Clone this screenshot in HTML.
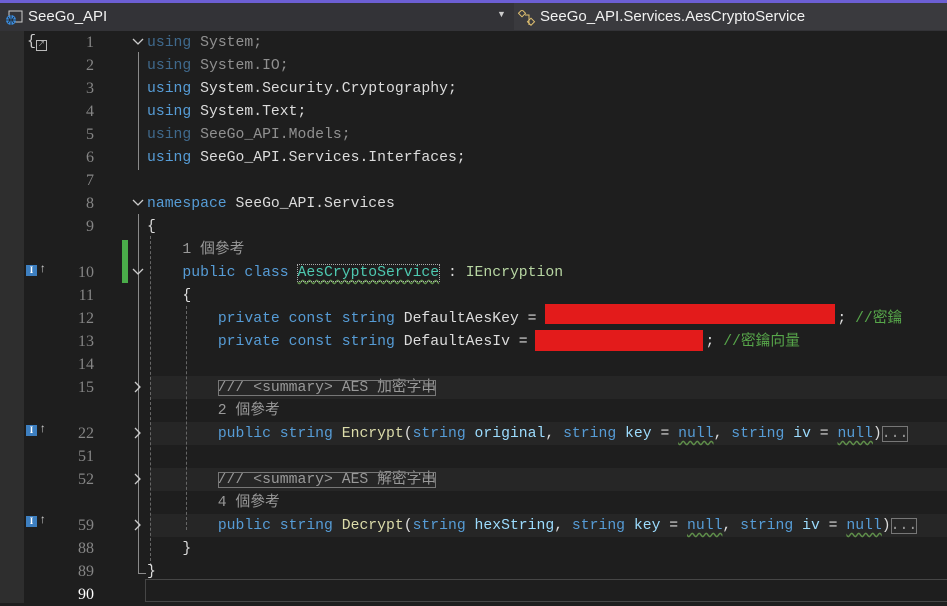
<!DOCTYPE html>
<html><head><meta charset="utf-8"><style>
body{margin:0;width:947px;height:603px;background:#1e1e1e;overflow:hidden;position:relative;font-family:"Liberation Mono","Noto Sans CJK TC",monospace;}
.top{position:absolute;left:0;top:0;width:947px;height:3px;background:#6c5fd4}
.hdr{position:absolute;left:0;top:3px;width:947px;height:28px;background:#333337;font-family:"Liberation Sans","Noto Sans CJK TC",sans-serif;font-size:15px;color:#f1f1f1}
.strip{position:absolute;left:0;top:31px;width:24px;height:572px;background:#2e2e2e}
.ln{position:absolute;left:50px;width:44px;text-align:right;color:#858585;font-family:"Liberation Serif",serif;font-size:16px;line-height:23px}
.row{position:absolute;left:147px;white-space:pre;font-size:14.75px;line-height:23px;color:#dcdcdc;top:1px}
.k{color:#569cd6}.t{color:#4ec9b0}.m{color:#dcdcaa}.p{color:#9cdcfe}.c{color:#57a64a}.g{color:#999}.d{opacity:.6}
.band{position:absolute;left:150px;width:797px;height:23px;background:#262626}
.w{text-decoration:underline wavy #5f8f4a;text-underline-offset:3px}
.fold{position:absolute;left:132px;width:12px;height:12px}
.icon{position:absolute;left:26px;width:11px;height:11px;background:#3d7fc0;color:#fff;font:bold 9px "Liberation Serif";text-align:center;line-height:11px}
.arr{position:absolute;left:39px;color:#ccc;font-size:12px;font-weight:bold}
</style></head><body>
<div class="top"></div>
<div class="hdr">
<svg style="position:absolute;left:5px;top:7px" width="18" height="16"><rect x="4" y="1" width="13" height="11" fill="none" stroke="#ccc"/><circle cx="6" cy="10" r="5" fill="#3b8de0"/><path d="M1 10h10M6 5v10M3 7q3 3 0 6M9 7q-3 3 0 6" stroke="#1e1e1e" fill="none" stroke-width=".8"/></svg>
<span style="position:absolute;left:28px;top:5px">SeeGo_API</span>
<span style="position:absolute;left:497px;top:6px;font-size:9px;color:#ccc">▼</span>
<div style="position:absolute;left:514px;top:0;width:433px;height:27px;background:#3a3a3e"></div>
<svg style="position:absolute;left:518px;top:7px" width="20" height="16"><rect x="1" y="1" width="5" height="5" transform="rotate(45 4 4)" fill="none" stroke="#e0c070"/><rect x="11" y="9" width="5" height="5" transform="rotate(45 13 11)" fill="none" stroke="#e0c070"/><path d="M7 5h4v10" stroke="#e0c070" fill="none"/></svg>
<span style="position:absolute;left:540px;top:5px">SeeGo_API.Services.AesCryptoService</span>
</div>
<div class="strip"></div>
<div style="position:absolute;left:27px;top:33px;color:#ccc;font-size:15px">{</div>
<div style="position:absolute;left:36px;top:40px;width:9px;height:9px;border:1px solid #bbb;font-size:7px;color:#bbb;line-height:9px;text-align:center">↗</div>

<div class="band" style="top:376px"></div>
<div class="band" style="top:422px"></div>
<div class="band" style="top:468px"></div>
<div class="band" style="top:514px"></div>

<div style="position:absolute;left:138px;top:52px;width:1px;height:118px;background:#8a8a8a"></div>
<div style="position:absolute;left:138px;top:214px;width:1px;height:360px;background:#8a8a8a"></div>
<div style="position:absolute;left:138px;top:573px;width:8px;height:1px;background:#8a8a8a"></div>
<div style="position:absolute;left:150px;top:236px;height:330px;border-left:1px dashed #666"></div>
<div style="position:absolute;left:186px;top:306px;height:224px;border-left:1px dashed #666"></div>
<div style="position:absolute;left:122px;top:240px;width:6px;height:43px;background:#4aac4a"></div>

<svg class="fold" style="top:36px"><path d="M1 3l5 5 5-5" stroke="#ccc" fill="none" stroke-width="1.3"/></svg>
<svg class="fold" style="top:197px"><path d="M1 3l5 5 5-5" stroke="#ccc" fill="none" stroke-width="1.3"/></svg>
<svg class="fold" style="top:266px"><path d="M1 3l5 5 5-5" stroke="#ccc" fill="none" stroke-width="1.3"/></svg>
<svg class="fold" style="top:381px"><path d="M3 1l5 5-5 5" stroke="#ccc" fill="none" stroke-width="1.3"/></svg>
<svg class="fold" style="top:427px"><path d="M3 1l5 5-5 5" stroke="#ccc" fill="none" stroke-width="1.3"/></svg>
<svg class="fold" style="top:473px"><path d="M3 1l5 5-5 5" stroke="#ccc" fill="none" stroke-width="1.3"/></svg>
<svg class="fold" style="top:519px"><path d="M3 1l5 5-5 5" stroke="#ccc" fill="none" stroke-width="1.3"/></svg>

<div class="icon" style="top:265px">I</div><div class="arr" style="top:262px">↑</div>
<div class="icon" style="top:425px">I</div><div class="arr" style="top:422px">↑</div>
<div class="icon" style="top:516px">I</div><div class="arr" style="top:513px">↑</div>

<div class="ln" style="top:31px">1</div><div class="ln" style="top:54px">2</div><div class="ln" style="top:77px">3</div><div class="ln" style="top:100px">4</div><div class="ln" style="top:123px">5</div><div class="ln" style="top:146px">6</div><div class="ln" style="top:169px">7</div><div class="ln" style="top:192px">8</div><div class="ln" style="top:215px">9</div><div class="ln" style="top:261px">10</div><div class="ln" style="top:284px">11</div><div class="ln" style="top:307px">12</div><div class="ln" style="top:330px">13</div><div class="ln" style="top:353px">14</div><div class="ln" style="top:376px">15</div><div class="ln" style="top:422px">22</div><div class="ln" style="top:445px">51</div><div class="ln" style="top:468px">52</div><div class="ln" style="top:514px">59</div><div class="ln" style="top:537px">88</div><div class="ln" style="top:560px">89</div><div class="ln" style="top:583px;color:#fff">90</div>

<div class="row d" style="top:32px"><span class="k">using</span> System;</div>
<div class="row d" style="top:55px"><span class="k">using</span> System.IO;</div>
<div class="row" style="top:78px"><span class="k">using</span> System.Security.Cryptography;</div>
<div class="row" style="top:101px"><span class="k">using</span> System.Text;</div>
<div class="row d" style="top:124px"><span class="k">using</span> SeeGo_API.Models;</div>
<div class="row" style="top:147px"><span class="k">using</span> SeeGo_API.Services.Interfaces;</div>
<div class="row" style="top:193px"><span class="k">namespace</span> SeeGo_API.Services</div>
<div class="row" style="top:216px">{</div>
<div class="row g" style="top:239px">    1 個參考</div>
<div class="row" style="top:262px">    <span class="k">public</span> <span class="k">class</span> <span class="t w" style="outline:1px dotted #aaa">AesCryptoService</span> : <span class="t" style="color:#b8d7a3">IEncryption</span></div>
<div class="row" style="top:285px">    {</div>
<div class="row" style="top:308px">        <span class="k">private</span> <span class="k">const</span> <span class="k">string</span> DefaultAesKey = <span style="display:inline-block;width:292px"></span>; <span class="c">//密鑰</span></div>
<div class="row" style="top:331px">        <span class="k">private</span> <span class="k">const</span> <span class="k">string</span> DefaultAesIv = <span style="display:inline-block;width:169px"></span>; <span class="c">//密鑰向量</span></div>
<div style="position:absolute;left:545px;top:304px;width:290px;height:20px;background:#e31b1b"></div>
<div style="position:absolute;left:535px;top:330px;width:168px;height:21px;background:#e31b1b"></div>
<div class="row g" style="top:377px">        <span style="outline:1px solid #777;outline-offset:-1px">/// &lt;summary&gt; AES 加密字串</span></div>
<div class="row g" style="top:400px">        2 個參考</div>
<div class="row" style="top:423px">        <span class="k">public</span> <span class="k">string</span> <span class="m">Encrypt</span>(<span class="k">string</span> <span class="p">original</span>, <span class="k">string</span> <span class="p">key</span> = <span class="k w">null</span>, <span class="k">string</span> <span class="p">iv</span> = <span class="k w">null</span>)<span class="g" style="outline:1px solid #777;outline-offset:-1px">...</span></div>
<div class="row g" style="top:469px">        <span style="outline:1px solid #777;outline-offset:-1px">/// &lt;summary&gt; AES 解密字串</span></div>
<div class="row g" style="top:492px">        4 個參考</div>
<div class="row" style="top:515px">        <span class="k">public</span> <span class="k">string</span> <span class="m">Decrypt</span>(<span class="k">string</span> <span class="p">hexString</span>, <span class="k">string</span> <span class="p">key</span> = <span class="k w">null</span>, <span class="k">string</span> <span class="p">iv</span> = <span class="k w">null</span>)<span class="g" style="outline:1px solid #777;outline-offset:-1px">...</span></div>
<div class="row" style="top:538px">    }</div>
<div class="row" style="top:561px">}</div>
<div style="position:absolute;left:145px;top:579px;width:810px;height:21px;border:1px solid #464646"></div>
</body></html>
